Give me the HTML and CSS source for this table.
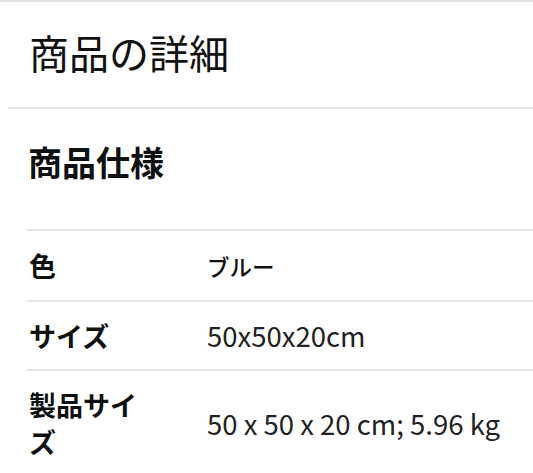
FILE: index.html
```html
<!DOCTYPE html>
<html lang="ja">
<head>
<meta charset="utf-8">
<link rel="stylesheet" href="styles.css">
</head>
<body>
<div class="page">
  <header class="header">
    <h1 class="title">商品の詳細</h1>
  </header>
  <section class="section">
    <h2 class="subtitle">商品仕様</h2>
    <div class="specs">
      <div class="row">
        <div class="label">色</div>
        <div class="value"><span class="kana">ブルー</span></div>
      </div>
      <div class="row">
        <div class="label">サイズ</div>
        <div class="value">50x50x20cm</div>
      </div>
      <div class="row">
        <div class="label">製品サイズ</div>
        <div class="value">50 x 50 x 20 cm; 5.96 kg</div>
      </div>
    </div>
  </section>
</div>
</body>
</html>
```

FILE: styles.css
```css
html, body {
  margin: 0;
  padding: 0;
  background: #ffffff;
}
body {
  font-family: "Noto Sans CJK JP", "Noto Sans", sans-serif;
  color: #0f1111;
  overflow: hidden;
}
.page {
  border-top: 2px solid #e3e3e3;
}
.header {
  height: 107px;
  display: flex;
  align-items: center;
  margin-left: 8px;
  padding-left: 21px;
  padding-bottom: 5px;
  box-sizing: border-box;
  border-bottom: 2px solid #e6e6e6;
}
.title {
  margin: 0;
  font-size: 40px;
  font-weight: 400;
  line-height: 1;
  color: #111;
}
.section {
  padding-left: 27px;
}
.subtitle {
  margin: 0;
  height: 120px;
  display: flex;
  align-items: center;
  padding-left: 1px;
  padding-bottom: 15px;
  font-size: 34px;
  font-weight: 700;
  line-height: 1;
  box-sizing: border-box;
}
.row {
  display: grid;
  grid-template-columns: 124px 1fr;
  column-gap: 54px;
  align-items: center;
  border-top: 2px solid #e6e6e6;
  padding: 15px 0 15px 2px;
}
.label {
  font-size: 27px;
  font-weight: 700;
  line-height: 37px;
}
.value {
  font-size: 27.5px;
  font-weight: 400;
  line-height: 37px;
  color: #222;
}
.kana {
  font-size: 22.5px;
  font-weight: 500;
  color: #111;
}
```
